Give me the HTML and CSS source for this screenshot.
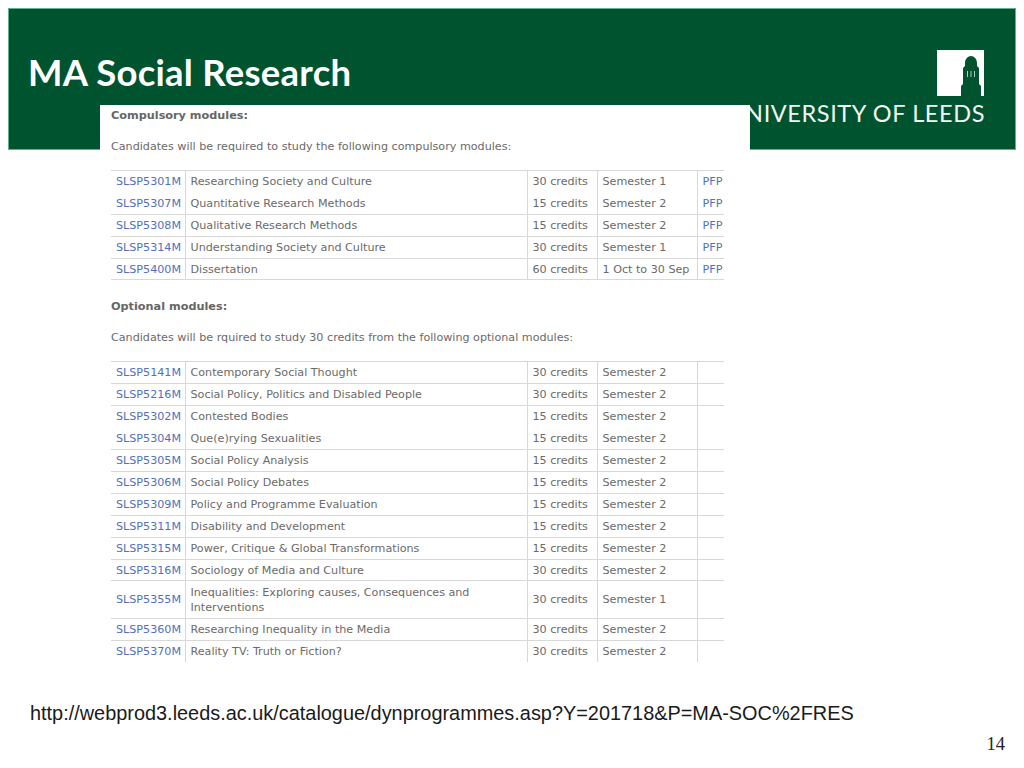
FILE: index.html
```html
<!DOCTYPE html>
<html lang="en">
<head>
<meta charset="utf-8">
<title>MA Social Research</title>
<link rel="stylesheet" href="styles.css">
</head>
<body>
<div class="slide">
  <header class="banner">
    <h1 class="title">MA Social Research</h1>
    <div class="brand">
      <svg class="crest" viewBox="0 0 47 46" aria-hidden="true">
        <rect width="47" height="46" fill="#fff"/>
        <path fill="#00532f" d="M24 46V36L26 34V18L28 16V13C28 9 31 6 34 6S40 9 40 13V16L42 18V34L44 36V46Z"/>
        <path stroke="#dfe9e4" stroke-width=".8" d="M30.5 21v6M34 21v6M37.5 21v6"/>
      </svg>
      <div class="wordmark">UNIVERSITY OF LEEDS</div>
    </div>
  </header>

  <section class="capture">
    <h2 class="heading">Compulsory modules:</h2>
    <p class="lead">Candidates will be required to study the following compulsory modules:</p>
    <table class="modules">
      <colgroup><col class="c-code"><col class="c-name"><col class="c-credits"><col class="c-term"><col class="c-pfp"></colgroup>
      <tr class="r22"><td><a>SLSP5301M</a></td><td>Researching Society and Culture</td><td>30 credits</td><td>Semester 1</td><td><a>PFP</a></td></tr>
      <tr class="r22 plain"><td><a>SLSP5307M</a></td><td>Quantitative Research Methods</td><td>15 credits</td><td>Semester 2</td><td><a>PFP</a></td></tr>
      <tr class="r22"><td><a>SLSP5308M</a></td><td>Qualitative Research Methods</td><td>15 credits</td><td>Semester 2</td><td><a>PFP</a></td></tr>
      <tr class="r22"><td><a>SLSP5314M</a></td><td>Understanding Society and Culture</td><td>30 credits</td><td>Semester 1</td><td><a>PFP</a></td></tr>
      <tr class="r21 last"><td><a>SLSP5400M</a></td><td>Dissertation</td><td>60 credits</td><td>1 Oct to 30 Sep</td><td><a>PFP</a></td></tr>
    </table>

    <h2 class="heading second">Optional modules:</h2>
    <p class="lead">Candidates will be rquired to study 30 credits from the following optional modules:</p>
    <table class="modules">
      <colgroup><col class="c-code"><col class="c-name"><col class="c-credits"><col class="c-term"><col class="c-pfp"></colgroup>
      <tr class="r22"><td><a>SLSP5141M</a></td><td>Contemporary Social Thought</td><td>30 credits</td><td>Semester 2</td><td></td></tr>
      <tr class="r22"><td><a>SLSP5216M</a></td><td>Social Policy, Politics and Disabled People</td><td>30 credits</td><td>Semester 2</td><td></td></tr>
      <tr class="r22"><td><a>SLSP5302M</a></td><td>Contested Bodies</td><td>15 credits</td><td>Semester 2</td><td></td></tr>
      <tr class="r22 plain"><td><a>SLSP5304M</a></td><td>Que(e)rying Sexualities</td><td>15 credits</td><td>Semester 2</td><td></td></tr>
      <tr class="r22"><td><a>SLSP5305M</a></td><td>Social Policy Analysis</td><td>15 credits</td><td>Semester 2</td><td></td></tr>
      <tr class="r22"><td><a>SLSP5306M</a></td><td>Social Policy Debates</td><td>15 credits</td><td>Semester 2</td><td></td></tr>
      <tr class="r22"><td><a>SLSP5309M</a></td><td>Policy and Programme Evaluation</td><td>15 credits</td><td>Semester 2</td><td></td></tr>
      <tr class="r22"><td><a>SLSP5311M</a></td><td>Disability and Development</td><td>15 credits</td><td>Semester 2</td><td></td></tr>
      <tr class="r22"><td><a>SLSP5315M</a></td><td>Power, Critique &amp; Global Transformations</td><td>15 credits</td><td>Semester 2</td><td></td></tr>
      <tr class="r21"><td><a>SLSP5316M</a></td><td>Sociology of Media and Culture</td><td>30 credits</td><td>Semester 2</td><td></td></tr>
      <tr class="r38"><td><a>SLSP5355M</a></td><td>Inequalities: Exploring causes, Consequences and Interventions</td><td>30 credits</td><td>Semester 1</td><td></td></tr>
      <tr class="r22"><td><a>SLSP5360M</a></td><td>Researching Inequality in the Media</td><td>30 credits</td><td>Semester 2</td><td></td></tr>
      <tr class="r21"><td><a>SLSP5370M</a></td><td>Reality TV: Truth or Fiction?</td><td>30 credits</td><td>Semester 2</td><td></td></tr>
    </table>
  </section>

  <p class="source">http://webprod3.leeds.ac.uk/catalogue/dynprogrammes.asp?Y=201718&amp;P=MA-SOC%2FRES</p>
  <div class="page-no">14</div>
</div>
</body>
</html>
```

FILE: styles.css
```css
* { box-sizing: border-box; }
html, body { margin: 0; padding: 0; background: #fff; }
body { width: 1024px; height: 768px; overflow: hidden; }

.slide {
  position: relative;
  width: 1024px;
  height: 768px;
  padding: 8px 8px 0;
}

.banner {
  height: 142px;
  background: #00532f;
  border: 1px solid #62b093;
  display: flex;
  justify-content: space-between;
  align-items: flex-start;
  padding: 41px 31px 0 19px;
}

.title {
  margin: 0;
  font: 700 36.5px/44px Lato, sans-serif;
  letter-spacing: 0.25px;
  color: #fff;
}

.brand {
  display: flex;
  flex-direction: column;
  align-items: flex-end;
}

.crest { display: block; width: 47px; height: 46px; }

.wordmark {
  margin: 4px -1px 0 0;
  font: 400 23.5px/26px Lato, sans-serif;
  letter-spacing: 0.6px;
  color: #f2f7f4;
  white-space: nowrap;
}

.capture {
  position: absolute;
  left: 100px;
  top: 105px;
  width: 650px;
  height: 560px;
  padding: 4px 0 0 11px;
  background: #fff;
  font-family: "DejaVu Sans", Verdana, sans-serif;
  font-size: 11.15px;
  color: #6a6a6a;
}

.heading {
  margin: 0;
  font-size: 11.25px;
  line-height: 14px;
  font-weight: 700;
  color: #666;
}

.heading.second { margin: 20px 0 1px; }

.lead {
  margin: 17px 0 16px;
  line-height: 14px;
}

.modules {
  width: 613px;
  table-layout: fixed;
  border-collapse: collapse;
  line-height: 15px;
}

.c-code { width: 74px; }
.c-name { width: 342px; }
.c-credits { width: 70px; }
.c-term { width: 100px; }
.c-pfp { width: 27px; }

.modules td {
  padding: 0 0 0 5px;
  border-top: 1px solid #d8d8d8;
  border-left: 1px solid #d8d8d8;
  vertical-align: middle;
  white-space: normal;
}

.modules td:first-child { border-left: 0; }
.modules .plain td { border-top-color: transparent; }
.modules .last td { border-bottom: 1px solid #d8d8d8; }

.modules a { color: #5270bd; }

.r22 { height: 22px; }
.r21 { height: 21px; }
.r38 { height: 38px; }

.source {
  margin: 551px 0 0 22px;
  font: 400 19.9px/24px "Liberation Sans", Arial, sans-serif;
  color: #1a1a1a;
}

.page-no {
  margin: 7px 11px 0 0;
  text-align: right;
  font: 400 18.5px/24px "Liberation Serif", "Times New Roman", serif;
  color: #222;
}
```
